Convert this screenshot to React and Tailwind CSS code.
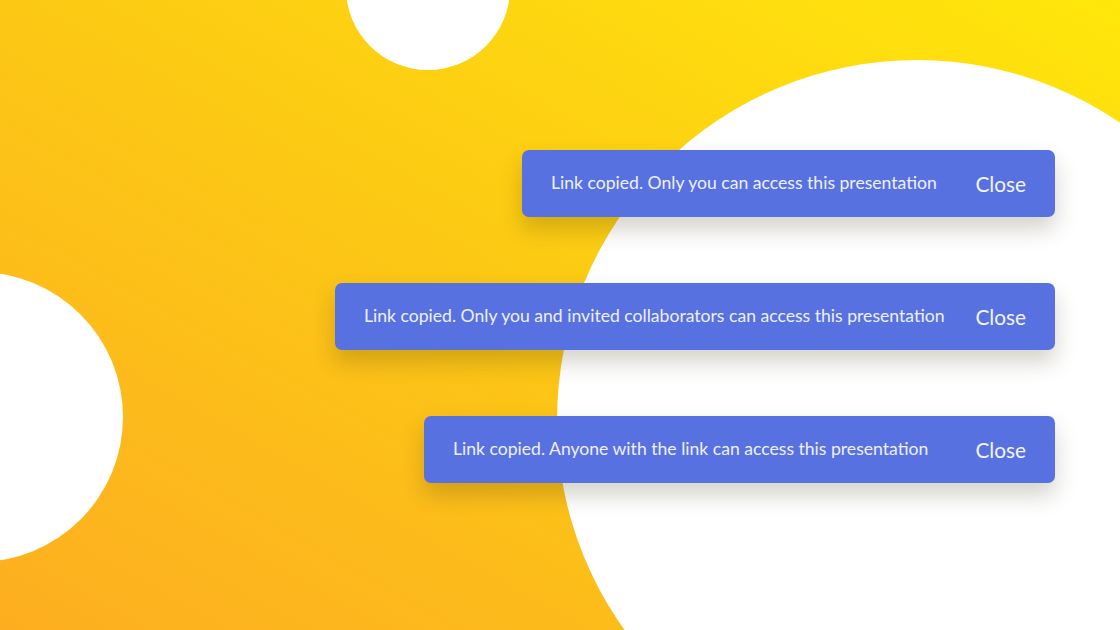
const toasts = [
  { text: "Link copied. Only you can access this presentation", w: "w-[533px]" },
  { text: "Link copied. Only you and invited collaborators can access this presentation", w: "w-[720px]" },
  { text: "Link copied. Anyone with the link can access this presentation", w: "w-[631px]" },
];

function Toast({ text, w }) {
  return (
    <div className={`${w} flex h-[67px] items-center justify-between rounded-[7px] bg-[#5871e0] pl-[29px] pr-[29px] shadow-[0_12px_22px_rgba(60,50,20,0.22)]`}>
      <span className="whitespace-nowrap text-[17.6px] text-[#eef0fb]">{text}</span>
      <button className="ml-[30px] text-[20.8px] text-[#f3f4fc]">Close</button>
    </div>
  );
}

export default function App() {
  return (
    <div
      className="relative h-[630px] w-[1120px] overflow-hidden bg-gradient-to-tr from-[#fdae20] via-[#fcc814] to-[#ffe70a]"
      style={{ fontFamily: "Lato, 'Open Sans', sans-serif" }}
    >
      <div className="absolute left-[346px] top-[-94px] h-[164px] w-[164px] rounded-full bg-white" />
      <div className="absolute left-[-167px] top-[272px] h-[290px] w-[290px] rounded-full bg-white" />
      <div className="absolute left-[557px] top-[60px] h-[720px] w-[720px] rounded-full bg-white" />

      <div className="relative flex flex-col items-end gap-[66px] pr-[65px] pt-[150px]">
        {toasts.map((t) => (
          <Toast key={t.text} text={t.text} w={t.w} />
        ))}
      </div>
    </div>
  );
}
